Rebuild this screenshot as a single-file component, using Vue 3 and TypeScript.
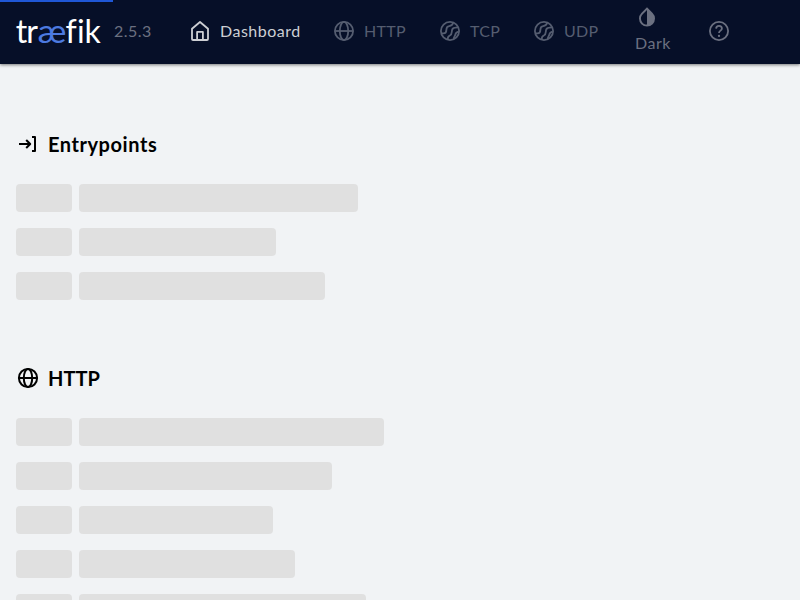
<script setup lang="ts">
type IconName = 'home' | 'globe' | 'ball'

interface Tab {
  label: string
  icon: IconName
  key: string
}

interface Section {
  title: string
  icon: 'entry' | 'globe'
  bars: number[]
}

const version = '2.5.3'

const tabs: Tab[] = [
  { label: 'Dashboard', icon: 'home', key: 'dashboard' },
  { label: 'HTTP', icon: 'globe', key: 'http' },
  { label: 'TCP', icon: 'ball', key: 'tcp' },
  { label: 'UDP', icon: 'ball', key: 'udp' },
]

const sections: Section[] = [
  { title: 'Entrypoints', icon: 'entry', bars: [279, 197, 246] },
  { title: 'HTTP', icon: 'globe', bars: [305, 253, 194, 216, 287] },
]
</script>

<template>
  <div class="layout">
    <header class="bar">
      <div class="progress"></div>
      <svg class="logo" width="92" height="36" viewBox="0 0 92 36" role="img">
        <text y="29.4" class="logo-text">
          <tspan x="-0.3">t</tspan><tspan x="10.2">r</tspan><tspan class="logo-ae" x="21.6" textLength="29" lengthAdjust="spacingAndGlyphs">æ</tspan><tspan x="49.4">f</tspan><tspan x="61">i</tspan><tspan x="68.4">k</tspan>
        </text>
      </svg>
      <span class="version">{{ version }}</span>
      <nav class="tabs">
        <a v-for="tab in tabs" :key="tab.key" class="tab" :class="[tab.key, { active: tab.icon === 'home' }]">
          <svg class="icon" viewBox="0 0 24 24">
            <template v-if="tab.icon === 'home'">
              <path d="M4 9.8 12 3l8 6.8V20a1 1 0 0 1-1 1H5a1 1 0 0 1-1-1Z" />
              <path d="M9.1 21v-8.1h5.8V21" />
            </template>
            <template v-else-if="tab.icon === 'globe'">
              <circle cx="12" cy="12" r="9.1" />
              <ellipse cx="12" cy="12" rx="4.2" ry="9.1" />
              <path d="M3 12h18" />
            </template>
            <template v-else>
              <circle cx="12" cy="12" r="9.1" />
              <path d="M3.3 14.3h2.3c2.2 0 2.8-1.5 2.8-3.6 0-2.4.8-3.2 2.8-3.5 2.2-.3 3.4-1.1 4-3.4" />
              <path d="M9.6 20.7c0-2.6.6-3.5 2.2-4.2 1.7-.8 2-1.9 2-3.7 0-2.8 1.3-4.1 3.5-4.2l2.8-.2" />
              <path d="M15.8 20c-.1-1.9 1-2.4 1.4-3.9.4-1.6.5-3 3.4-3.4" />
            </template>
          </svg>
          <span class="label">{{ tab.label }}</span>
        </a>
      </nav>
      <button class="theme">
        <svg width="24" height="24" viewBox="0 0 24 24">
          <path fill="currentColor" d="M17.66 7.93 12 2.27 6.34 7.93a8 8 0 0 0 0 11.31A7.98 7.98 0 0 0 12 21.58a7.98 7.98 0 0 0 5.66-2.34 8 8 0 0 0 0-11.31ZM12 19.59a6 6 0 0 1-4.24-10.25L12 5.1v14.49Z" />
        </svg>
        <span>Dark</span>
      </button>
      <svg class="icon help" viewBox="0 0 24 24">
        <circle cx="12" cy="12" r="9.1" />
        <path d="M9.1 9.6c.1-1.8 1.3-2.7 2.9-2.7s2.9 1.1 2.9 2.6c0 2.1-2.9 2.2-2.9 4.5" />
        <circle class="dot" cx="12" cy="16.9" r="1.15" />
      </svg>
    </header>

    <main class="content">
      <section v-for="section in sections" :key="section.title" class="section">
        <h2 class="heading">
          <svg class="icon" :class="section.icon" viewBox="0 0 24 24">
            <template v-if="section.icon === 'entry'">
              <path d="M3 12h10.8M10.2 8l4 4-4 4M16 5h3v14h-3" />
            </template>
            <template v-else>
              <circle cx="12" cy="12" r="9.1" />
              <ellipse cx="12" cy="12" rx="4.2" ry="9.1" />
              <path d="M3 12h18" />
            </template>
          </svg>
          <span :class="'title-' + section.icon">{{ section.title }}</span>
        </h2>
        <div v-for="(width, i) in section.bars" :key="i" class="row">
          <div class="skeleton short"></div>
          <div class="skeleton" :style="{ width: width + 'px' }"></div>
        </div>
      </section>
    </main>
  </div>
</template>

<style>
body {
  margin: 0;
  overflow: hidden;
}
</style>

<style scoped>
.layout {
  box-sizing: border-box;
  height: 600px;
  overflow: hidden;
  background: #f1f3f5;
  color: #000;
  font-family: Lato, "Open Sans", sans-serif;
}
.bar {
  position: relative;
  display: flex;
  align-items: center;
  box-sizing: border-box;
  height: 64px;
  padding-left: 16px;
  background: #060f28;
  color: #6b7080;
  box-shadow: 0 1px 3px rgba(0, 0, 0, 0.5);
}
.progress {
  position: absolute;
  top: 0;
  left: 0;
  width: 113px;
  height: 2px;
  background: #1f57d6;
}
.logo {
  flex: none;
  overflow: visible;
}
.logo-text {
  font-size: 32px;
  fill: #fff;
}
.logo-ae {
  fill: #4c7ae0;
}
.version {
  flex: none;
  width: 74px;
  margin-left: 6px;
  padding-bottom: 2px;
  font-size: 16px;
  line-height: 24px;
  letter-spacing: 0.5px;
}
.tabs {
  display: flex;
  flex: none;
  width: 447px;
}
.tab {
  display: flex;
  align-items: center;
  gap: 8px;
  padding-bottom: 2px;
  color: #555d70;
  font-size: 16px;
  line-height: 24px;
}
.tab .label {
  letter-spacing: 0.3px;
}
.tab.active {
  color: #cdcfd4;
}
.dashboard {
  width: 144px;
}
.http {
  width: 106px;
}
.tcp {
  width: 94px;
}
.tab.dashboard .label {
  letter-spacing: 0.5px;
}
.icon {
  flex: none;
  width: 24px;
  height: 24px;
  fill: none;
  stroke: currentColor;
  stroke-width: 1.8;
  stroke-linejoin: round;
}
.help {
  margin-bottom: 2px;
}
.theme {
  display: flex;
  flex: none;
  flex-direction: column;
  align-items: flex-start;
  width: 72px;
  height: 64px;
  padding: 5px 0 0;
  border: 0;
  background: none;
  color: #6b7080;
  font: inherit;
  font-size: 16px;
  line-height: 24px;
  letter-spacing: 0.5px;
}
.theme span {
  margin-top: 2px;
}
.dot {
  fill: currentColor;
  stroke: none;
}
.content {
  padding: 64px 16px 0;
}
.section {
  margin-bottom: 62px;
}
.heading {
  display: flex;
  align-items: center;
  gap: 8px;
  height: 32px;
  margin: 0 0 24px;
  font-size: 20px;
  font-weight: 700;
  line-height: 32px;
}
.title-entry {
  letter-spacing: 0.55px;
}
.heading .icon {
  stroke-width: 2;
}
.row {
  display: flex;
  gap: 7px;
  margin-bottom: 16px;
}
.skeleton {
  height: 28px;
  border-radius: 4px;
  background: #e0e0e0;
}
.short {
  width: 56px;
}
</style>
